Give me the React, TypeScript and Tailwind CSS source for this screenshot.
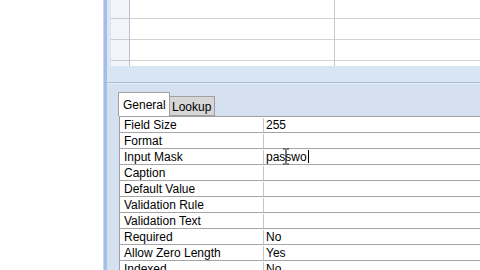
import React from 'react';

const rows: [string, string][] = [
  ['Field Size', '255'],
  ['Format', ''],
  ['Input Mask', 'passwo'],
  ['Caption', ''],
  ['Default Value', ''],
  ['Validation Rule', ''],
  ['Validation Text', ''],
  ['Required', 'No'],
  ['Allow Zero Length', 'Yes'],
  ['Indexed', 'No'],
];

function IBeam() {
  return (
    <svg className="absolute left-[18px] top-[-2px]" width="8" height="17" viewBox="0 0 8 17">
      <path d="M1 1h2.5M4.5 1H7M4 1.5v14M1 16h2.5M4.5 16H7" stroke="#222" strokeWidth="1.2" fill="none" />
    </svg>
  );
}

export default function App() {
  return (
    <div
      className="w-[480px] h-[270px] overflow-hidden bg-white flex"
      style={{ fontFamily: '"Liberation Sans", Arial, sans-serif' }}
    >
      <div className="w-[103px] shrink-0 bg-white" />
      <div className="w-[4px] shrink-0 bg-[#a3bfe4] border-l border-[#c9daf0]" />
      <div className="flex-1 flex flex-col bg-[#d5e1f0] min-h-0 overflow-hidden">
        {/* table grid */}
        <div className="h-[66px] shrink-0 flex bg-white">
          <div className="w-[4px] bg-[#dce6f3]" />
          <div className="w-[19px] bg-[#f2f5fa] border-r border-[#b9c3cf] flex flex-col">
            <div className="h-[19px] border-b border-[#c3ccd8]" />
            <div className="h-[21px] border-b border-[#c3ccd8]" />
            <div className="h-[21px] border-b border-[#c3ccd8]" />
          </div>
          <div className="flex-1 flex flex-col">
            {[19, 21, 21].map((h, i) => (
              <div key={i} className="flex shrink-0 border-b border-[#d3d3d3]" style={{ height: h }}>
                <div className="w-[205px] border-r border-[#c8c8c8]" />
                <div className="flex-1" />
              </div>
            ))}
            <div className="flex flex-1">
              <div className="w-[205px] border-r border-[#c8c8c8]" />
            </div>
          </div>
        </div>
        <div className="h-[17px] shrink-0 bg-[#d8e5f3] border-b border-[#a9bdd5]" />
        <div className="h-[1px] shrink-0 bg-[#e6eef8]" />
        {/* property sheet */}
        <div className="shrink-0 pl-[11px] pt-[8px]">
          <div className="flex items-end h-[24px]">
            <div className="w-[52px] h-[24px] bg-white border border-b-0 border-[#a0a0a0] text-[12px] text-black pl-[4px] pt-[5px] leading-[14px] relative z-10">
              General
            </div>
            <div className="w-[45px] h-[20px] bg-[#d6d6d6] border border-l-0 border-[#a0a0a0] text-[12px] text-black pl-[2px] pt-[3px] leading-[14px]">
              Lookup
            </div>
          </div>
          <div className="bg-white border-l border-t border-[#a0a0a0] ml-[1px]">
            {rows.map(([k, v]) => (
              <div key={k} className="flex h-[16px] border-b border-[#a6a6a6] text-[12px] leading-[15px] pt-[1px] text-black">
                <div className="w-[144px] pl-[4px] border-r border-[#c4c4c4] whitespace-nowrap">{k}</div>
                <div className="flex-1 pl-[2px] relative whitespace-nowrap">
                  {v}
                  {k === 'Input Mask' && (
                    <>
                      <span className="inline-block w-[1px] h-[13px] bg-black align-[-2px] ml-[1px]" />
                      <IBeam />
                    </>
                  )}
                </div>
              </div>
            ))}
          </div>
        </div>
      </div>
    </div>
  );
}
